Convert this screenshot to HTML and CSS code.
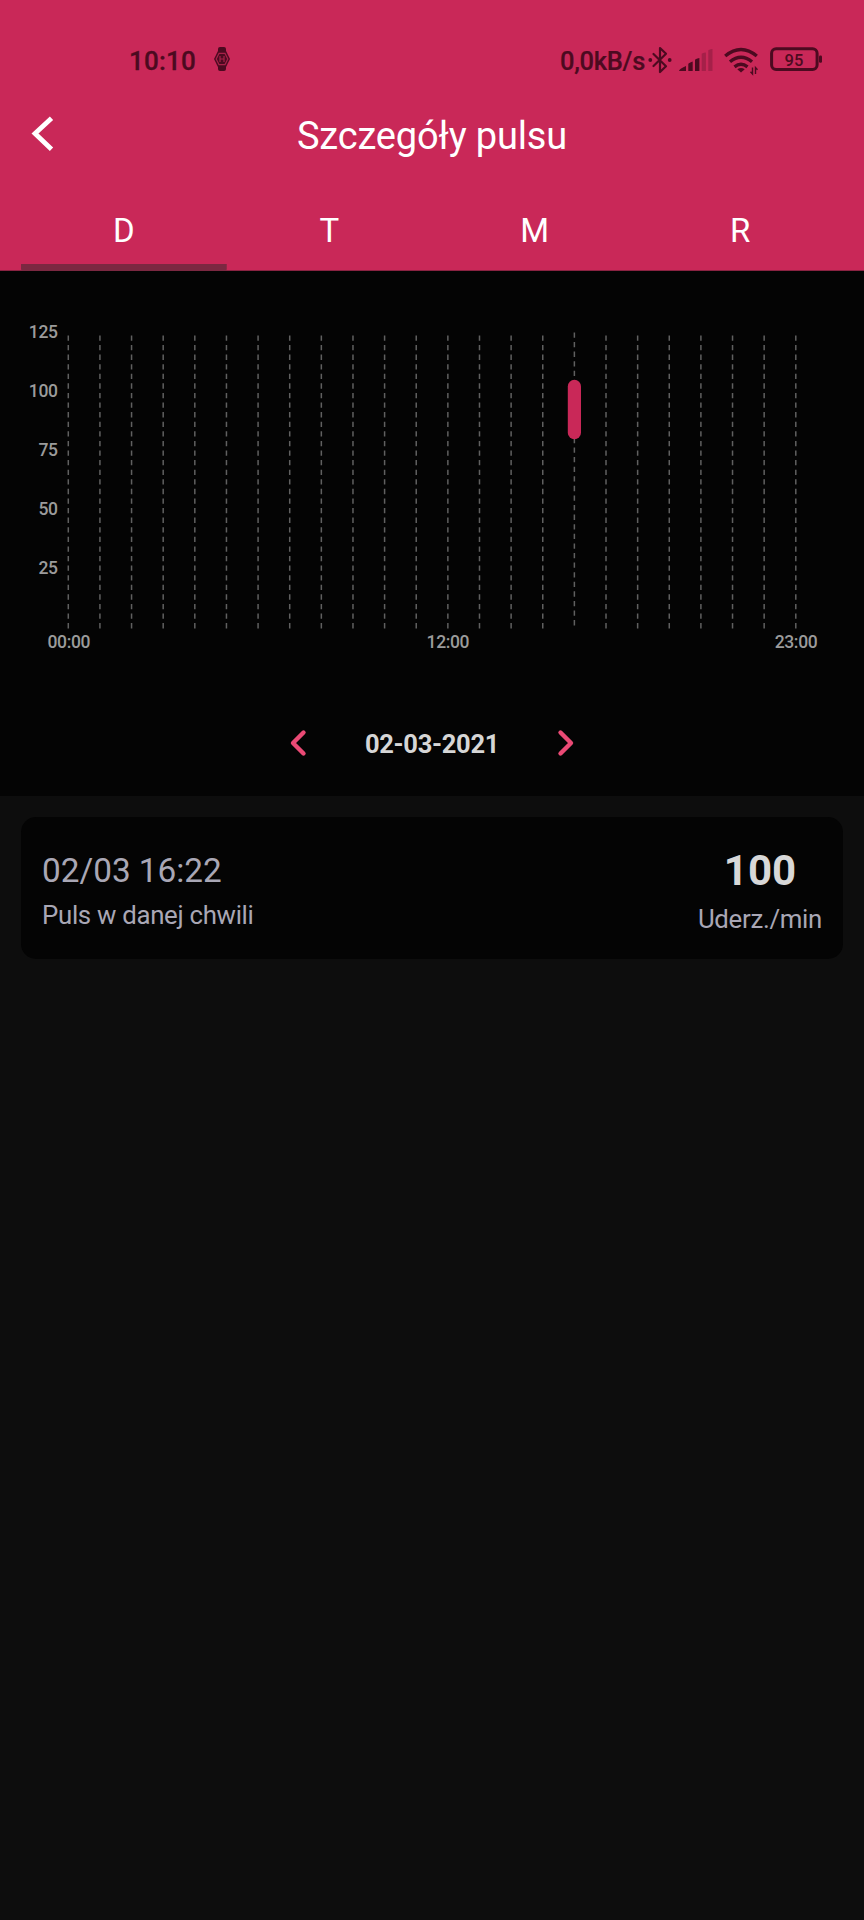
FILE: index.html
```html
<!DOCTYPE html>
<html lang="pl">
<head>
<meta charset="utf-8">
<title>Szczegóły pulsu</title>
<link rel="stylesheet" href="styles.css">
</head>
<body>
<header class="header">
  <div class="status">
    <div class="status-group">
      <span class="clock">10:10</span>
      <svg class="watch" width="18" height="26" viewBox="0 0 18 26">
        <path class="fill" d="M5 6V3q0-2 2-2h4q2 0 2 2v3zM5 20v3q0 2 2 2h4q2 0 2-2v-3z"/>
        <path class="fill" d="M5.2 4.500h7.600l4.200 8.500-4.200 8.500H5.200L1 13z"/>
        <path class="cut" d="M6 7.400h6l2.800 5.600-2.800 5.600H6L3.200 13z"/>
        <path class="cut" d="M7 10v6M11 10v6M7 13h4"/>
      </svg>
    </div>
    <div class="status-group">
      <span class="speed">0,0kB/s</span>
      <svg class="bluetooth" width="24" height="28" viewBox="0 0 24 28">
        <path class="line" d="M5.500 8L18 20.200 12 26V2l6 5.800L5.500 20"/>
        <circle class="fill" cx="2.300" cy="14" r="1.900"/>
        <circle class="fill" cx="21.700" cy="14" r="1.900"/>
      </svg>
      <svg class="signal" width="34" height="26" viewBox="0 0 34 26">
        <path class="fill" d="M0 24q0-2 7-5v5zM9.300 24v-7q0-1 4.400-2.500v9.500zM16 24V13q0-1 4.400-2v13z"/>
        <path class="faint" d="M22.700 24V7q0-1 4.200-1.500V24zM29.300 24V3.500q0-1 4.200-1.500v22z"/>
      </svg>
      <svg class="wifi" width="34" height="28" viewBox="0 0 34 28">
        <path class="arc" d="M1.200 9q15.800-13 31.600 0M6 14.700q11-9 22 0M10.500 19.800q6.500-5 13 0"/>
        <path class="fill" d="M13.300 22.300q3.700-2.600 7.400 0L17 25.500z"/>
        <path class="tiny" d="M28.500 20.500v6.500l-2-2.300M31.500 27v-6.500l2 2.300"/>
      </svg>
      <svg class="battery" width="54" height="26" viewBox="0 0 54 26">
        <rect class="case" x="1.600" y="2.800" width="45.500" height="20.600" rx="4.500"/>
        <rect class="fill" x="49" y="9.500" width="3" height="7.200" rx="1.200"/>
        <text class="charge" x="24" y="19.500">95</text>
      </svg>
    </div>
  </div>
  <div class="titlebar">
    <svg class="back" width="24" height="36" viewBox="0 0 24 36"><path d="M20.500 2.200L4 17.500l16.500 15.700"/></svg>
    <h1 class="title">Szczegóły pulsu</h1>
  </div>
  <nav class="tabs">
    <a class="tab active">D</a>
    <a class="tab">T</a>
    <a class="tab">M</a>
    <a class="tab">R</a>
  </nav>
</header>
<section class="panel">
  <svg class="chart" width="864" height="400" viewBox="0 271 864 400">
    <g id="grid"></g>
    <rect class="bar" x="567.800" y="379.800" width="13.200" height="59.500" rx="6.600"/>
    <g class="ylabels">
      <text x="57.600" y="337.700">125</text>
      <text x="57.600" y="396.700">100</text>
      <text x="57.600" y="455.700">75</text>
      <text x="57.600" y="515">50</text>
      <text x="57.600" y="574">25</text>
    </g>
    <g class="xlabels">
      <text x="68.800" y="647.500">00:00</text>
      <text x="447.900" y="647.500">12:00</text>
      <text x="796" y="647.500">23:00</text>
    </g>
  </svg>
  <div class="datenav">
    <svg class="arrow" width="18" height="28" viewBox="0 0 18 28"><path d="M14.500 3.500L4 14l10.500 10.500"/></svg>
    <span class="date">02-03-2021</span>
    <svg class="arrow" width="18" height="28" viewBox="0 0 18 28"><path d="M3.500 3.500L14 14 3.500 24.500"/></svg>
  </div>
</section>
<main class="list">
  <article class="card">
    <div class="when">
      <span class="time">02/03 16:22</span>
      <span class="label">Puls w danej chwili</span>
    </div>
    <div class="reading">
      <span class="value">100</span>
      <span class="label">Uderz./min</span>
    </div>
  </article>
</main>
<script src="chart.js"></script>
</body>
</html>
```

FILE: styles.css
```css
* { box-sizing: border-box; }
body {
  margin: 0;
  min-height: 1920px;
  background: #0d0d0d;
  font-family: Roboto, "Liberation Sans", sans-serif;
}
svg { display: block; flex: none; overflow: visible; }

.header { height: 271px; background: #c92858; border-bottom: 1px solid #8a2342; }
.status {
  display: flex;
  justify-content: space-between;
  height: 91px;
  padding: 31px 40px 0 129px;
  color: #4c0a20;
  font-weight: 500;
  font-size: 26px;
}
.status-group { display: flex; align-items: center; }
.watch { margin-left: 17px; margin-top: -4px; }
.bluetooth { margin-left: 3px; margin-top: -3px; }
.signal { margin-left: 7px; margin-top: -3px; }
.wifi { margin-left: 11px; margin-top: -1px; }
.battery { margin-left: 12px; margin-top: -4px; }
.clock, .speed { line-height: 30px; white-space: nowrap; }
.clock { letter-spacing: 0.2px; }
.speed { font-size: 25.500px; letter-spacing: -0.300px; -webkit-text-stroke: 0.200px #4c0a20; }
.clock { -webkit-text-stroke: 0.300px #4c0a20; }
.fill { fill: #4c0a20; }
.faint { fill: #a52049; }
.cut { fill: none; stroke: #a82149; stroke-width: 1.200; }
.line { fill: none; stroke: #4c0a20; stroke-width: 2.200; stroke-linejoin: round; stroke-linecap: round; }
.arc { fill: none; stroke: #4c0a20; stroke-width: 3.400; }
.tiny { fill: none; stroke: #4c0a20; stroke-width: 1.400; }
.case { fill: none; stroke: #4c0a20; stroke-width: 3; }
.charge { fill: #4c0a20; font-size: 16.500px; font-weight: 500; text-anchor: middle; }

.titlebar {
  display: grid;
  grid-template-columns: 60px 1fr 60px;
  align-items: center;
  height: 90px;
}
.back { margin: -4px 0 0 31px; }
.back path { fill: none; stroke: #fff; stroke-width: 4.800; }
.title { margin: 0; color: #fff; font-weight: 400; font-size: 38px; letter-spacing: -0.150px; line-height: 46px; text-align: center; }

.tabs { display: flex; height: 90px; padding: 0 21px; }
.tab {
  flex: 1;
  padding-top: 30px;
  color: #fff;
  font-size: 33px;
  line-height: 40px;
  text-align: center;
}
.tab.active {
  background: linear-gradient(#7b2841, #7b2841) bottom / 100% 7px no-repeat;
  border-radius: 2px;
}

.panel { height: 525px; background: #040404; }
.gridline { stroke: #606060; stroke-width: 1.500; stroke-dasharray: 5.300 4.290; }
.bar { fill: #c92858; }
.ylabels, .xlabels { fill: #9b9b9b; font-size: 17.500px; font-weight: 500; letter-spacing: -0.350px; }
.ylabels { text-anchor: end; }
.xlabels { text-anchor: middle; }

.datenav { display: flex; justify-content: center; align-items: center; height: 144px; gap: 58px; }
.arrow path { fill: none; stroke: #ea4a75; stroke-width: 4.400; stroke-linecap: round; stroke-linejoin: round; }
.date { padding-top: 1px; color: #d6d6d6; font-weight: 700; font-size: 25.500px; line-height: 30px; letter-spacing: -0.300px; }

.list { padding: 21px 21px; }
.card {
  display: flex;
  justify-content: space-between;
  height: 142px;
  padding: 31px 21px 0 21px;
  border-radius: 15px;
  background: #040404;
}
.when, .reading { display: flex; flex-direction: column; }
.reading { align-items: center; }
.time { padding-top: 1px; color: #a9a7b5; font-size: 33.300px; line-height: 44px; }
.value { color: #d8d8d8; font-weight: 700; font-size: 42px; line-height: 46px; }
.label { color: #a9a7b5; font-size: 25.800px; letter-spacing: -0.300px; line-height: 36px; padding-top: 7px; }
.when .label { padding-top: 4px; }
```

FILE: chart.js
```js
// One dashed line per hour; the hour that holds a reading starts slightly higher.
const grid = document.getElementById('grid');
for (let hour = 0; hour < 24; hour++) {
  const line = document.createElementNS('http://www.w3.org/2000/svg', 'line');
  const x = (68.3 + hour * 31.63).toFixed(2);
  const top = hour === 16 ? 332.4 : 335.4;
  line.setAttribute('x1', x);
  line.setAttribute('x2', x);
  line.setAttribute('y1', top);
  line.setAttribute('y2', top + 293.2);
  line.setAttribute('class', 'gridline');
  grid.appendChild(line);
}
```
